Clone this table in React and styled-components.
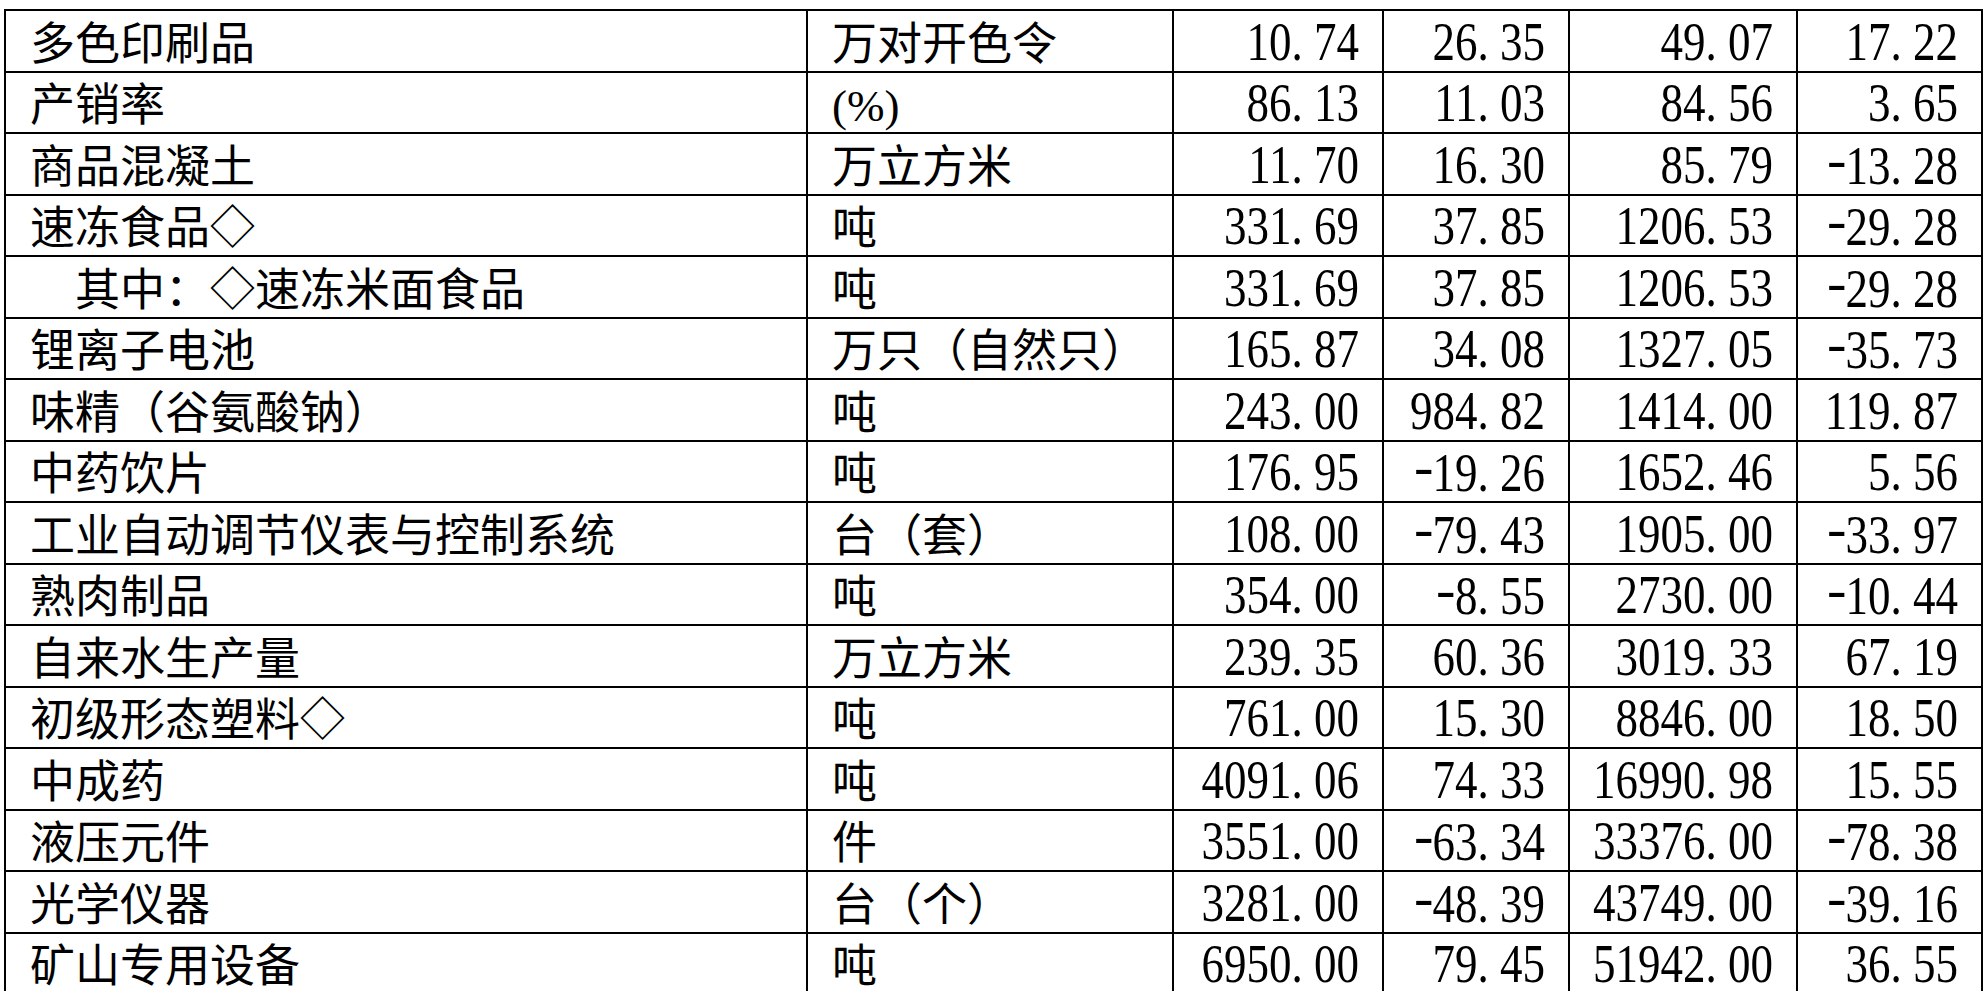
import React from 'react'
import styled, { createGlobalStyle } from 'styled-components'

const GlobalStyle = createGlobalStyle`
  html, body {
    margin: 0;
    padding: 0;
    background: #fff;
  }
  body {
    font-family: "Liberation Serif", "Noto Sans CJK SC", serif;
    color: #000;
  }
`

const Page = styled.div`
  padding: 9px 0 0 4px;
  height: 100vh;
  overflow: hidden;
  box-sizing: border-box;
`

const Table = styled.div`
  display: grid;
  grid-template-columns: 800px 364px 208px 184px 226px 183px;
  grid-auto-rows: 59.5px;
  gap: 2px;
  padding: 2px;
  background: #000;
  width: max-content;
`

const Row = styled.div`
  display: contents;
`

const Cell = styled.div`
  background: #fff;
  display: flex;
  min-width: 0;
  white-space: nowrap;
  box-sizing: border-box;
`

const TextCell = styled(Cell)`
  align-items: center;
  padding-top: 9px;
  padding-left: ${p => (p.$indent ? 69 : 24)}px;
  font-family: "Liberation Serif", "Noto Sans CJK SC", serif;
  font-size: 45px;
  line-height: 1;
`

const NumCell = styled(Cell)`
  align-items: flex-end;
  justify-content: flex-end;
  padding-right: 23px;
`

const NumText = styled.span`
  display: inline-block;
  font-family: "Liberation Serif", serif;
  font-size: 45px;
  line-height: 1;
  margin-bottom: 3px;
  transform: scaleY(1.2);
  transform-origin: 50% 0.8375em;
`

const Dot = styled.span`
  display: inline-block;
  width: 0.5em;
  text-align: left;
`

const Minus = styled.span`
  display: inline-block;
  vertical-align: 0.11em;
  width: 0.42em;
  transform: scaleX(1.3);
  transform-origin: left center;
`

const rows = [
  ['多色印刷品', '万对开色令', '10.74', '26.35', '49.07', '17.22'],
  ['产销率', '(%)', '86.13', '11.03', '84.56', '3.65'],
  ['商品混凝土', '万立方米', '11.70', '16.30', '85.79', '-13.28'],
  ['速冻食品◇', '吨', '331.69', '37.85', '1206.53', '-29.28'],
  ['其中：◇速冻米面食品', '吨', '331.69', '37.85', '1206.53', '-29.28', true],
  ['锂离子电池', '万只（自然只）', '165.87', '34.08', '1327.05', '-35.73'],
  ['味精（谷氨酸钠）', '吨', '243.00', '984.82', '1414.00', '119.87'],
  ['中药饮片', '吨', '176.95', '-19.26', '1652.46', '5.56'],
  ['工业自动调节仪表与控制系统', '台（套）', '108.00', '-79.43', '1905.00', '-33.97'],
  ['熟肉制品', '吨', '354.00', '-8.55', '2730.00', '-10.44'],
  ['自来水生产量', '万立方米', '239.35', '60.36', '3019.33', '67.19'],
  ['初级形态塑料◇', '吨', '761.00', '15.30', '8846.00', '18.50'],
  ['中成药', '吨', '4091.06', '74.33', '16990.98', '15.55'],
  ['液压元件', '件', '3551.00', '-63.34', '33376.00', '-78.38'],
  ['光学仪器', '台（个）', '3281.00', '-48.39', '43749.00', '-39.16'],
  ['矿山专用设备', '吨', '6950.00', '79.45', '51942.00', '36.55'],
]

// SimSun style number: half-width digits, the point takes a full digit cell
const Num = ({ value }) => {
  const neg = value.startsWith('-')
  const [int, frac] = value.replace('-', '').split('.')
  return (
    <NumCell>
      <NumText>
        {neg && <Minus>-</Minus>}
        {int}
        <Dot>.</Dot>
        {frac}
      </NumText>
    </NumCell>
  )
}

const App = () => {
  return (
    <Page>
      <GlobalStyle />
      <Table>
        {rows.map((r, i) => (
          <Row key={i}>
            <TextCell $indent={r[6]}>{r[0]}</TextCell>
            <TextCell>{r[1]}</TextCell>
            <Num value={r[2]} />
            <Num value={r[3]} />
            <Num value={r[4]} />
            <Num value={r[5]} />
          </Row>
        ))}
      </Table>
    </Page>
  )
}

export default App
